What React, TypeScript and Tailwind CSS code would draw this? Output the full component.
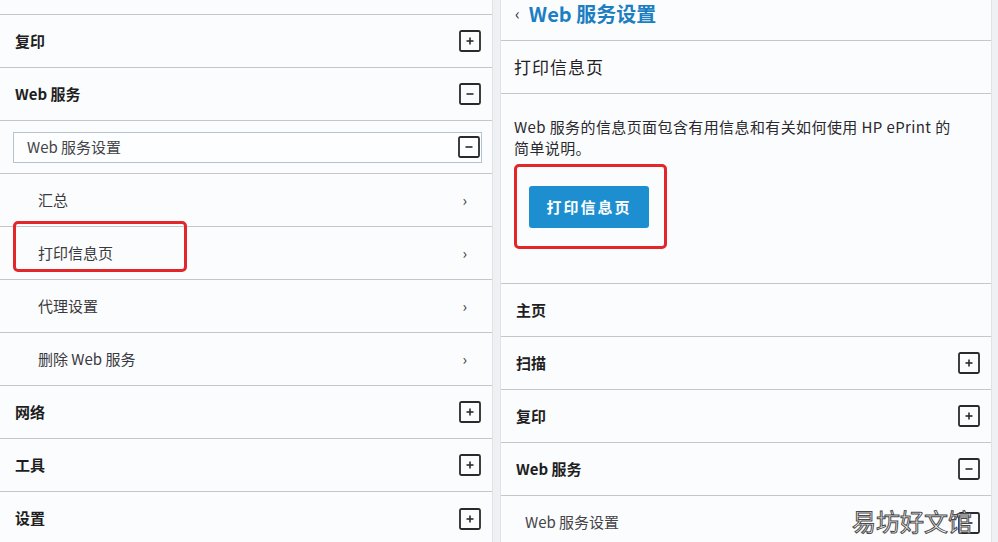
import React from 'react';

const FONT = '"Noto Sans CJK SC", "Noto Sans", sans-serif';

function BoxIcon({ open }: { open?: boolean }) {
    return (
        <svg width="22" height="22" viewBox="0 0 22 22" className="shrink-0">
            <rect x="1" y="1" width="20" height="20" rx="1.5" fill="none" stroke="#2a2a2e" strokeWidth="1.8" />
            <line x1="7.5" y1="11" x2="14.5" y2="11" stroke="#2a2a2e" strokeWidth="1.6" />
            {!open && <line x1="11" y1="7.5" x2="11" y2="14.5" stroke="#2a2a2e" strokeWidth="1.6" />}
        </svg>
    );
}

function SectionRow({ label, open, icon = true, last = false }: { label: string; open?: boolean; icon?: boolean; last?: boolean }) {
    return (
        <div className={`shrink-0 flex items-center justify-between h-[53px] pl-[15px] pr-[11px] ${last ? '' : 'border-b border-[#c3c7cc]'}`}>
            <span className="text-[15px] font-bold text-[#1e1e22]">{label}</span>
            {icon && <BoxIcon open={open} />}
        </div>
    );
}

function SubRow({ label, children }: { label: string; children?: React.ReactNode }) {
    return (
        <div className="relative shrink-0 flex items-center justify-between h-[53px] pl-[38px] pr-[25px] border-b border-[#c3c7cc]">
            <span className="text-[15px] text-[#3a3a3e]">{label}</span>
            <span className="text-[15px] text-[#333]">›</span>
            {children}
        </div>
    );
}

export default function App() {
    return (
        <div className="relative w-[998px] h-[542px] overflow-hidden bg-[#eef0f3] flex gap-[7px]" style={{ fontFamily: FONT }}>
            {/* left column */}
            <div className="w-[493px] shrink-0 bg-[#fbfcfd] border-r border-[#dfe2e6] flex flex-col">
                <div className="h-[15px] shrink-0 border-b border-[#c3c7cc]" />
                <SectionRow label="复印" />
                <SectionRow label="Web 服务" open />
                <div className="h-[53px] shrink-0 flex items-center border-b border-[#c3c7cc] pl-[13px] pr-[10px]">
                    <div className="flex-1 h-[31px] flex items-center justify-between border border-[#b5c2cf] bg-[#fdfeff] pl-[13px] pr-[1px]">
                        <span className="text-[15px] text-[#444448]">Web 服务设置</span>
                        <BoxIcon open />
                    </div>
                </div>
                <SubRow label="汇总" />
                <SubRow label="打印信息页">
                    <div className="absolute left-[13px] top-[-6px] w-[174px] h-[51px] border-[3px] border-[#e3262a] rounded-[5px]" />
                </SubRow>
                <SubRow label="代理设置" />
                <SubRow label="删除 Web 服务" />
                <SectionRow label="网络" />
                <SectionRow label="工具" />
                <SectionRow label="设置" last />
            </div>

            {/* right column */}
            <div className="w-[492px] shrink-0 bg-[#fbfcfd] border-x border-[#dfe2e6] flex flex-col">
                <div className="h-[41px] shrink-0 flex items-start pt-[1px] pl-[14px] gap-[9px] border-b border-[#c3c7cc]">
                    <span className="text-[16px] text-[#333] leading-[24px]">‹</span>
                    <span className="text-[20px] font-bold text-[#1b7fc2] leading-[26px]">Web 服务设置</span>
                </div>
                <div className="h-[53px] shrink-0 flex items-center pl-[13px] border-b border-[#c3c7cc]">
                    <span className="text-[17px] text-[#222226] tracking-[1px]">打印信息页</span>
                </div>
                <div className="h-[190px] shrink-0 pl-[13px] pt-[22px] border-b border-[#c3c7cc]">
                    <p className="text-[15px] leading-[21px] text-[#2a2a2e] tracking-[0.4px]">
                        Web 服务的信息页面包含有用信息和有关如何使用 HP ePrint 的<br />简单说明。
                    </p>
                    <div className="mt-[6px] w-[153px] h-[85px] border-[3px] border-[#e3262a] rounded-[5px] pl-[12px] pt-[19px]">
                        <button className="w-[120px] h-[42px] rounded-[3px] bg-[#1d8fd0] text-white text-[15px] font-bold tracking-[2px]">
                            打印信息页
                        </button>
                    </div>
                </div>
                <SectionRow label="主页" icon={false} />
                <SectionRow label="扫描" />
                <SectionRow label="复印" />
                <SectionRow label="Web 服务" open />
                <div className="h-[53px] shrink-0 flex items-center justify-between pl-[24px] pr-[11px]">
                    <span className="text-[15px] text-[#444448]">Web 服务设置</span>
                    <BoxIcon open />
                </div>
            </div>

            {/* watermark */}
            <div className="absolute right-[26px] bottom-[5px] text-[24px] leading-[32px] text-white [-webkit-text-stroke:1px_#4a4a4a]">
                易坊好文馆
            </div>
        </div>
    );
}
